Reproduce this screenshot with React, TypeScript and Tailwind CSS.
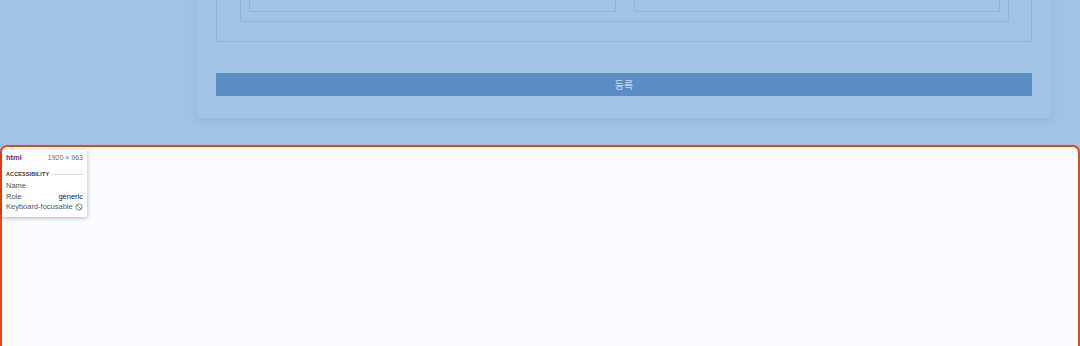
import React from "react";

export default function App() {
  return (
    <div className="relative w-[1080px] h-[346px] overflow-hidden bg-[#9fc4e8]" style={{ fontFamily: '"Noto Sans", "Noto Sans CJK KR", sans-serif' }}>
      {/* top page area */}
      <div className="h-[145px] overflow-hidden">
        <div className="ml-[197px] w-[854px] mt-[-40px] h-[158px] bg-[#a0c5e9] shadow-[0_2px_6px_rgba(60,100,150,0.12)] px-[19px] pt-[20px]">
          <div className="h-[62px] border border-[#8fb7de] pl-[23px] pr-[22px] pt-[10px]">
            <div className="h-[31px] border border-[#8fb7de] px-[8px] flex gap-[18px]">
              <div className="flex-1 h-[20px] border border-[#8fb7de] border-t-0 rounded-b-[2px]" />
              <div className="flex-1 h-[20px] border border-[#8fb7de] border-t-0 rounded-b-[2px]" />
            </div>
          </div>
          <div className="mt-[31px] h-[23px] bg-[#5a8dc4] flex items-center justify-center text-[10px] text-[#c9ddf1]" style={{ fontFamily: '"Noto Sans CJK KR", sans-serif' }}>
            등록
          </div>
        </div>
      </div>

      {/* highlighted html element */}
      <div className="h-[210px] border-[2.5px] border-b-0 border-[#e8471d] rounded-t-[7px] bg-[#fafcff]" />

      {/* devtools tooltip */}
      <div className="absolute left-[2px] top-[150px] w-[85px] h-[67px] bg-white rounded-[2px] shadow-[0_1px_4px_rgba(0,0,0,0.3)] pl-[4px] pr-[4px] pt-[3px] text-[7.5px] leading-[10px] text-[#555]" style={{ fontFamily: '"Liberation Sans", Arial, sans-serif' }}>
        <div className="flex justify-between items-center h-[10px]">
          <span className="font-bold text-[#881280]">html</span>
          <span className="text-[#666] text-[7px]">1920 × 963</span>
        </div>
        <div className="flex items-center gap-[3px] mt-[7px] h-[8px]">
          <span className="text-[5.5px] font-bold tracking-[0.1px] text-[#333]">ACCESSIBILITY</span>
          <div className="flex-1 h-px bg-[#ddd]" />
        </div>
        <div className="mt-[3px] h-[10.5px]">Name</div>
        <div className="flex justify-between h-[10.5px]">
          <span>Role</span>
          <span className="text-[#222]">generic</span>
        </div>
        <div className="flex justify-between items-center h-[10.5px]">
          <span>Keyboard-focusable</span>
          <svg width="8" height="8" viewBox="0 0 16 16" fill="none" stroke="#666" strokeWidth="1.5">
            <circle cx="8" cy="8" r="6.2" />
            <path d="M3.6 3.6 L12.4 12.4" />
          </svg>
        </div>
      </div>
    </div>
  );
}
